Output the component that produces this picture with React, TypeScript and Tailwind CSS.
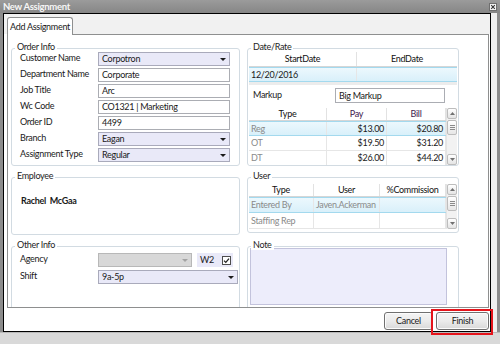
import React from 'react';

type CellDef = { text: string; className?: string };

const Arrow: React.FC<{ color?: string }> = ({ color = '#1a1a1a' }) => (
  <svg width="6" height="3" viewBox="0 0 6 3" className="shrink-0">
    <path d="M0 0h6L3 3z" fill={color} />
  </svg>
);

const GroupBox: React.FC<{ title: string; className?: string; children?: React.ReactNode }> = ({ title, className = '', children }) => (
  <div className={`relative shrink-0 border border-[#d2dbe2] rounded-[3px] ${className}`}>
    <span className="absolute top-[-7px] left-[3px] bg-white px-[2px] text-[9px] leading-[10px] text-[#1e1e1e] whitespace-nowrap">{title}</span>
    {children}
  </div>
);

const Select: React.FC<{ value?: string; className?: string; disabled?: boolean }> = ({ value = '', className = '', disabled }) => (
  <div
    className={`flex items-center h-[14px] border pl-[3px] pr-[3px] ${
      disabled ? 'border-[#b8b8b8] bg-[#d8d8d8]' : 'border-[#a9aabb] bg-[#e9e9f8]'
    } ${className}`}
  >
    <span className="flex-1 leading-[10px]">{value}</span>
    <Arrow color={disabled ? '#a3a3a3' : '#1a1a1a'} />
  </div>
);

const Input: React.FC<{ value: string; className?: string }> = ({ value, className = '' }) => (
  <div className={`flex items-center h-[14px] border border-[#abadb3] bg-white pl-[3px] leading-[10px] ${className}`}>{value}</div>
);

const Field: React.FC<{ label: string; children: React.ReactNode }> = ({ label, children }) => (
  <div className="flex items-center h-[14px]">
    <span className="w-[78px] shrink-0 leading-[10px] mt-[-2px] whitespace-nowrap">{label}</span>
    {children}
  </div>
);

const SbButton: React.FC<{ up?: boolean }> = ({ up }) => (
  <div className="h-[11px] shrink-0 border border-[#bdbdbd] rounded-[2px] bg-gradient-to-b from-white to-[#e4e4e4] flex items-center justify-center">
    <svg width="5" height="3" viewBox="0 0 5 3">
      <path d={up ? 'M0 3h5L2.5 0z' : 'M0 0h5L2.5 3z'} fill="#707070" />
    </svg>
  </div>
);

const ScrollBar: React.FC = () => (
  <div className="w-[11px] shrink-0 flex flex-col bg-[#f2f2f2] border-l border-[#e4e4e4]">
    <SbButton up />
    <div className="mt-[1px] h-[15px] shrink-0 border border-[#bdbdbd] rounded-[2px] bg-gradient-to-b from-white to-[#e6e6e6] flex flex-col items-center justify-center gap-[1px]">
      <div className="w-[5px] h-px bg-[#8a8a8a]" />
      <div className="w-[5px] h-px bg-[#8a8a8a]" />
      <div className="w-[5px] h-px bg-[#8a8a8a]" />
    </div>
    <div className="flex-1" />
    <SbButton />
  </div>
);

const GridTable: React.FC<{
  cols: string[];
  headers: CellDef[];
  rows: CellDef[][];
  headerH: string;
  rowH: string;
  selected?: number;
  scroll?: boolean;
  className?: string;
}> = ({ cols, headers, rows, headerH, rowH, selected, scroll, className = '' }) => (
  <div className={`flex overflow-hidden bg-white ${className}`}>
    <div className="flex-1 flex flex-col min-w-0">
      <div className={`flex ${headerH} shrink-0 border-b border-[#d6d6d6]`}>
        {headers.map((h, i) => (
          <div
            key={i}
            className={`${cols[i]} shrink-0 flex items-center justify-center border-r border-[#e2e2e2] leading-[10px] whitespace-nowrap ${h.className ?? 'text-[#111]'}`}
          >
            {h.text}
          </div>
        ))}
      </div>
      {rows.map((r, ri) => (
        <div
          key={ri}
          className={`flex ${rowH} shrink-0 border-b ${
            ri === selected ? 'border-t border-[#a3d9ee] bg-gradient-to-b from-[#ecf8fd] to-[#d9f0fa]' : 'border-[#e6e6e6]'
          }`}
        >
          {r.map((c, ci) => (
            <div
              key={ci}
              className={`${cols[ci]} shrink-0 flex items-center px-[2px] border-r border-[#e6e6e6] leading-[10px] whitespace-nowrap ${c.className ?? ''}`}
            >
              {c.text}
            </div>
          ))}
        </div>
      ))}
    </div>
    {scroll && <ScrollBar />}
  </div>
);

const Button: React.FC<{ label: string; className?: string }> = ({ label, className = '' }) => (
  <div
    className={`h-[18px] flex items-center justify-center border border-[#707070] rounded-[3px] bg-gradient-to-b from-[#f4f4f4] via-[#ebebeb] to-[#d9d9d9] shadow-[inset_0_0_0_1px_#fcfcfc] text-[#1a1a1a] ${className}`}
  >
    {label}
  </div>
);

export default function App() {
  const muted = 'text-[#8a8a8a]';
  const right = 'justify-end';
  return (
    <div className="relative w-[500px] h-[344px] overflow-hidden flex flex-col bg-[#dadada] font-['Lato','Liberation_Sans',sans-serif] text-[9px] tracking-[-0.3px] text-[#1a1a1a]">
      {/* title bar */}
      <div className="h-[13px] shrink-0 flex items-center justify-between bg-gradient-to-b from-[#9b9b9b] to-[#868686] pl-[3px] pr-[3px]">
        <span className="font-bold text-[9.5px] leading-[10px] text-[#f6f6f6]">New Assignment</span>
        <svg width="8" height="8" viewBox="0 0 8 8">
          <rect x="0.5" y="0.5" width="7" height="7" fill="#f4f4f4" stroke="#6e6e6e" />
          <path d="M2.2 2.2l3.6 3.6M5.8 2.2l-3.6 3.6" stroke="#333" strokeWidth="1.1" />
        </svg>
      </div>

      <div className="flex h-[319px] shrink-0">
        <div className="w-[3px] bg-[#8c8c8c]" />
        <div className="w-[488px] border border-black bg-white flex flex-col">
          {/* tab strip */}
          <div className="h-[20px] shrink-0 bg-[#f1f1f1] flex items-end pl-[3px]">
            <div className="relative z-10 mb-[-1px] h-[18px] w-[66px] border border-b-0 border-[#8e8f8f] rounded-t-[3px] bg-white flex items-center justify-center leading-[10px] whitespace-nowrap">
              Add Assignment
            </div>
          </div>

          {/* tab panel */}
          <div className="ml-[3px] w-[482px] h-[274px] shrink-0 border border-[#8e8f8f] bg-white flex gap-[7px] pl-[3px] pt-[13px] overflow-hidden">
            {/* left column */}
            <div className="w-[229px] shrink-0 flex flex-col">
              <GroupBox title="Order Info" className="h-[118px]">
                <div className="flex flex-col gap-[2px] pt-[3px] pl-[8px]">
                  <Field label="Customer Name">
                    <Select value="Corpotron" className="w-[132px]" />
                  </Field>
                  <Field label="Department Name">
                    <Input value="Corporate" className="w-[132px]" />
                  </Field>
                  <Field label="Job Title">
                    <Input value="Arc" className="w-[132px]" />
                  </Field>
                  <Field label="Wc Code">
                    <Input value="CO1321 | Marketing" className="w-[132px]" />
                  </Field>
                  <Field label="Order ID">
                    <Input value="4499" className="w-[132px]" />
                  </Field>
                  <Field label="Branch">
                    <Select value="Eagan" className="w-[132px]" />
                  </Field>
                  <Field label="Assignment Type">
                    <Select value="Regular" className="w-[132px]" />
                  </Field>
                </div>
              </GroupBox>

              <GroupBox title="Employee" className="h-[58px] mt-[11px]">
                <div className="pl-[9px] pt-[18px] font-bold leading-[10px]">Rachel&nbsp; McGaa</div>
              </GroupBox>

              <GroupBox title="Other Info" className="h-[70px] mt-[11px]">
                <div className="flex flex-col gap-[3px] pt-[6px] pl-[8px]">
                  <Field label="Agency">
                    <Select disabled className="w-[94px]" />
                    <div className="ml-[5px] w-[36px] h-[14px] bg-[#e9e9f8] flex items-center pl-[3px] leading-[10px]">
                      <span className="flex-1">W2</span>
                      <svg width="9" height="9" viewBox="0 0 9 9" className="mr-[2px]">
                        <rect x="0.5" y="0.5" width="8" height="8" fill="#fff" stroke="#4d4d4d" />
                        <path d="M2 4.6l1.8 1.8L7 2.6" fill="none" stroke="#222" strokeWidth="1.3" />
                      </svg>
                    </div>
                  </Field>
                  <Field label="Shift">
                    <Select value="9a-5p" className="w-[140px]" />
                  </Field>
                </div>
              </GroupBox>
            </div>

            {/* right column */}
            <div className="w-[212px] shrink-0 flex flex-col">
              <GroupBox title="Date/Rate" className="h-[118px]">
                <div className="h-full overflow-hidden px-[1px] pt-[3px] flex flex-col">
                  <GridTable
                    cols={['w-[108px]', 'w-[101px]']}
                    headers={[{ text: 'StartDate' }, { text: 'EndDate' }]}
                    rows={[[{ text: '12/20/2016' }, { text: '' }]]}
                    headerH="h-[15px]"
                    rowH="h-[15px]"
                    selected={0}
                    className="shrink-0"
                  />
                  <div className="h-[3px] shrink-0 bg-[#ececec]" />
                  <div className="flex items-center h-[15px] mt-[3px] shrink-0">
                    <span className="w-[86px] shrink-0 pl-[4px] leading-[10px] mt-[-2px]">Markup</span>
                    <Input value="Big Markup" className="w-[110px] h-[15px]" />
                  </div>
                  <GridTable
                    cols={['w-[78px]', 'w-[60px]', 'w-[59px]']}
                    headers={[
                      { text: 'Type' },
                      { text: 'Pay', className: 'text-[#40184d]' },
                      { text: 'Bill', className: 'text-[#40184d]' },
                    ]}
                    rows={[
                      [{ text: 'Reg', className: muted }, { text: '$13.00', className: right }, { text: '$20.80', className: right }],
                      [{ text: 'OT', className: muted }, { text: '$19.50', className: right }, { text: '$31.20', className: right }],
                      [{ text: 'DT', className: muted }, { text: '$26.00', className: right }, { text: '$44.20', className: right }],
                    ]}
                    headerH="h-[13px]"
                    rowH="h-[15px]"
                    selected={0}
                    scroll
                    className="mt-[5px] h-[57px] shrink-0"
                  />
                </div>
              </GroupBox>

              <GroupBox title="User" className="h-[56px] mt-[11px]">
                <div className="h-full overflow-hidden px-[1px] pt-[6px]">
                  <GridTable
                    cols={['w-[65px]', 'w-[66px]', 'w-[66px]']}
                    headers={[{ text: 'Type' }, { text: 'User' }, { text: '%Commission' }]}
                    rows={[
                      [{ text: 'Entered By', className: muted }, { text: 'Javen.Ackerman', className: muted }, { text: '' }],
                      [{ text: 'Staffing Rep', className: muted }, { text: '' }, { text: '' }],
                    ]}
                    headerH="h-[13px]"
                    rowH="h-[16px]"
                    selected={0}
                    scroll
                    className="h-[45px]"
                  />
                </div>
              </GroupBox>

              <GroupBox title="Note" className="h-[70px] mt-[13px]">
                <div className="pt-[1px] pl-[2px]">
                  <div className="w-[197px] h-[57px] border border-[#c3c3dc] bg-[#ededfb]" />
                </div>
              </GroupBox>
            </div>
          </div>

          {/* buttons */}
          <div className="flex justify-end gap-[3px] pr-[1px] pt-[4px]">
            <Button label="Cancel" className="w-[49px]" />
            <Button label="Finish" className="w-[53px]" />
          </div>
        </div>
        <div className="w-[6px] bg-[#efefef]" />
        <div className="w-[3px] bg-[#8c8c8c]" />
      </div>
      <div className="flex-1 border-t border-[#b8b8b8] bg-[#d9d9d9]" />

      {/* highlight annotation */}
      <div className="absolute left-[431px] top-[309px] w-[62px] h-[26px] border-2 border-[#e5141b]" />
    </div>
  );
}
